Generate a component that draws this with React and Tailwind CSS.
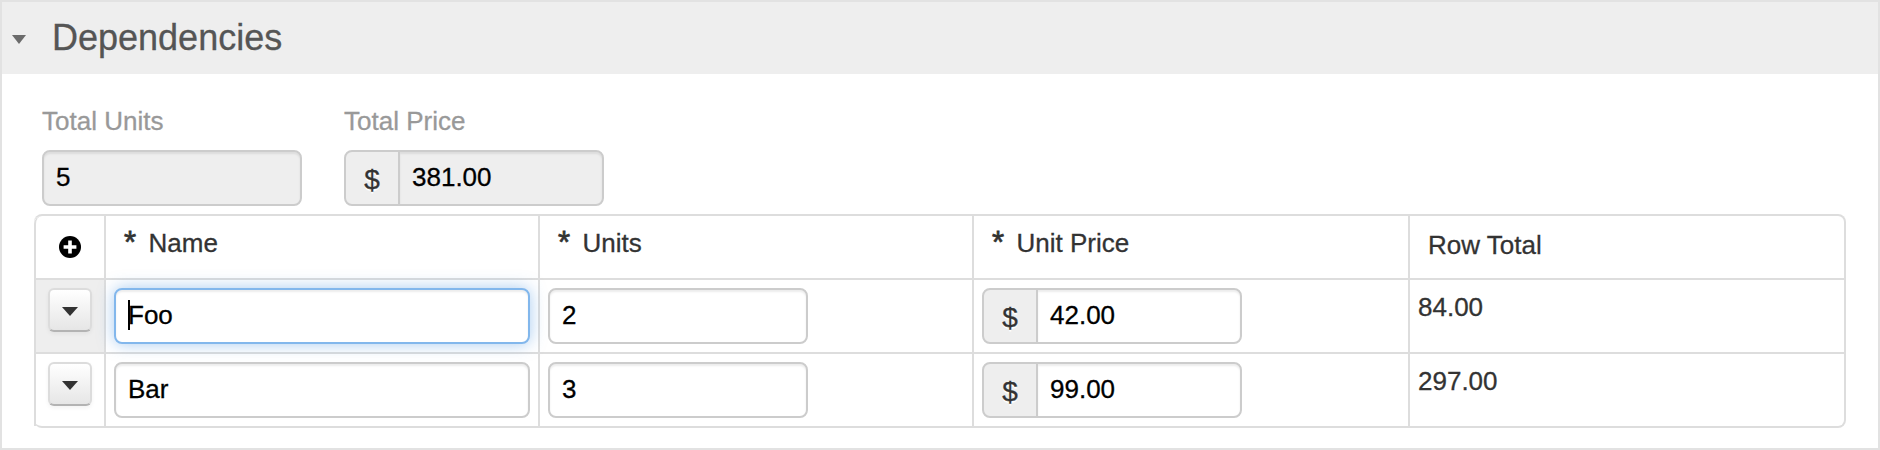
const FIELD =
  "h-14 border-2 border-[#cccccc] rounded-[8px] shadow-[inset_0_2px_2px_rgba(0,0,0,0.075)] pl-3 text-[26px] leading-[40px] pt-[5px] text-black";

function Field({ value, className = "bg-white w-[260px]", focused = false }) {
  const base = focused
    ? "relative h-14 border-2 border-[#82b7ec] rounded-[8px] shadow-[inset_0_2px_2px_rgba(0,0,0,0.075),0_0_16px_rgba(82,152,226,0.5)] pl-3 text-[26px] leading-[40px] pt-[5px] text-black"
    : FIELD;
  return (
    <div className={`${base} ${className}`}>
      {value}
      {focused && <span className="absolute left-3 top-[10px] h-[30px] w-[2px] bg-black" />}
    </div>
  );
}

function MoneyField({ value, readOnly = false }) {
  return (
    <div className="flex h-14 w-[260px]">
      <div className="w-14 rounded-l-[8px] border-2 border-[#cccccc] bg-[#eeeeee] pt-[8px] text-center text-[28px] leading-[40px] text-[#333333] [text-shadow:0_2px_0_#fff]">
        $
      </div>
      <div
        className={`-ml-0.5 flex-1 rounded-r-[8px] border-2 border-[#cccccc] pl-3 pt-[5px] text-[26px] leading-[40px] text-black shadow-[inset_0_2px_2px_rgba(0,0,0,0.075)] ${readOnly ? "bg-[#eeeeee]" : "bg-white"}`}
      >
        {value}
      </div>
    </div>
  );
}

function Caret({ className }) {
  return (
    <svg viewBox="0 0 16 8" preserveAspectRatio="none" className={className} fill="currentColor">
      <path d="M0 0h16L8 8z" />
    </svg>
  );
}

function MenuButton() {
  return (
    <button className="flex h-11 w-11 items-center justify-center rounded-[6px] border-2 border-[#dcdcdc] border-b-[#b3b3b3] bg-linear-to-b from-white to-[#e6e6e6] text-[#333333] shadow-[0_2px_4px_rgba(0,0,0,0.05)]">
      <Caret className="mt-0.5 h-[9px] w-4" />
    </button>
  );
}

function Heading({ label }) {
  return (
    <div className="flex border-l-2 border-[#dddddd] pl-[18px] pt-[7px] text-[26px] leading-[40px] text-[#333333]">
      <span className="w-[24.5px] text-[31px] [-webkit-text-stroke:0.8px_currentColor]">*</span>
      <span>{label}</span>
    </div>
  );
}

const ROWS = [
  { name: "Foo", units: "2", price: "42.00", total: "84.00", focused: true },
  { name: "Bar", units: "3", price: "99.00", total: "297.00", focused: false },
];

const CELL = "border-l-2 border-t-2 border-[#dddddd] pl-2";

export default function App() {
  return (
    <div className="h-[450px] w-[1880px] border-2 border-[#e2e2e2] bg-white font-['Liberation_Sans',Arial,sans-serif] [-webkit-text-stroke:0.3px_currentColor]">
      <div className="flex h-[72px] items-center bg-[#eeeeee] pl-[10px]">
        <Caret className="mt-0.5 h-[9px] w-[14px] text-[#6b6b6b]" />
        <h2 className="ml-[26px] text-[36px] leading-[40px] text-[#555555]">Dependencies</h2>
      </div>

      <div className="flex gap-[42px] pl-10 pt-[27px]">
        <div>
          <div className="h-[49px] text-[26px] leading-[40px] text-[#999999]">Total Units</div>
          <Field value="5" className="w-[260px] bg-[#eeeeee]" />
        </div>
        <div>
          <div className="h-[49px] text-[26px] leading-[40px] text-[#999999]">Total Price</div>
          <MoneyField value="381.00" readOnly />
        </div>
      </div>

      <div className="ml-8 mt-2 grid w-[1812px] grid-cols-[70px_434px_434px_436px_436px] grid-rows-[62px_74px_74px] rounded-[8px] border-2 border-l-0 border-[#dddddd]">
        <div className="flex justify-center rounded-tl-[8px] border-l-2 border-[#dddddd] pt-5">
          <svg viewBox="0 0 22 22" className="h-[22px] w-[22px]">
            <circle cx="11" cy="11" r="11" fill="#000" />
            <path d="M9.2 4.6h3.6v4.6h4.6v3.6h-4.6v4.6H9.2v-4.6H4.6V9.2h4.6z" fill="#fff" />
          </svg>
        </div>
        <Heading label="Name" />
        <Heading label="Units" />
        <Heading label="Unit Price" />
        <div className="border-l-2 border-[#dddddd] pl-[18px] pt-[9px] text-[26px] leading-[40px] text-[#333333]">
          Row Total
        </div>

        {ROWS.map((row) => (
          <div key={row.name} className="contents">
            <div
              className={`flex justify-center border-l-2 border-t-2 border-[#dddddd] pt-2 ${row.focused ? "bg-[#eeeeee]" : ""}`}
            >
              <MenuButton />
            </div>
            <div className={`${CELL} pt-2`}>
              <Field value={row.name} focused={row.focused} className="w-[416px] bg-white" />
            </div>
            <div className={`${CELL} pt-2`}>
              <Field value={row.units} />
            </div>
            <div className={`${CELL} pt-2`}>
              <MoneyField value={row.price} />
            </div>
            <div className={`${CELL} pt-[7px] text-[26px] leading-[40px] text-[#333333]`}>{row.total}</div>
          </div>
        ))}
      </div>
    </div>
  );
}
